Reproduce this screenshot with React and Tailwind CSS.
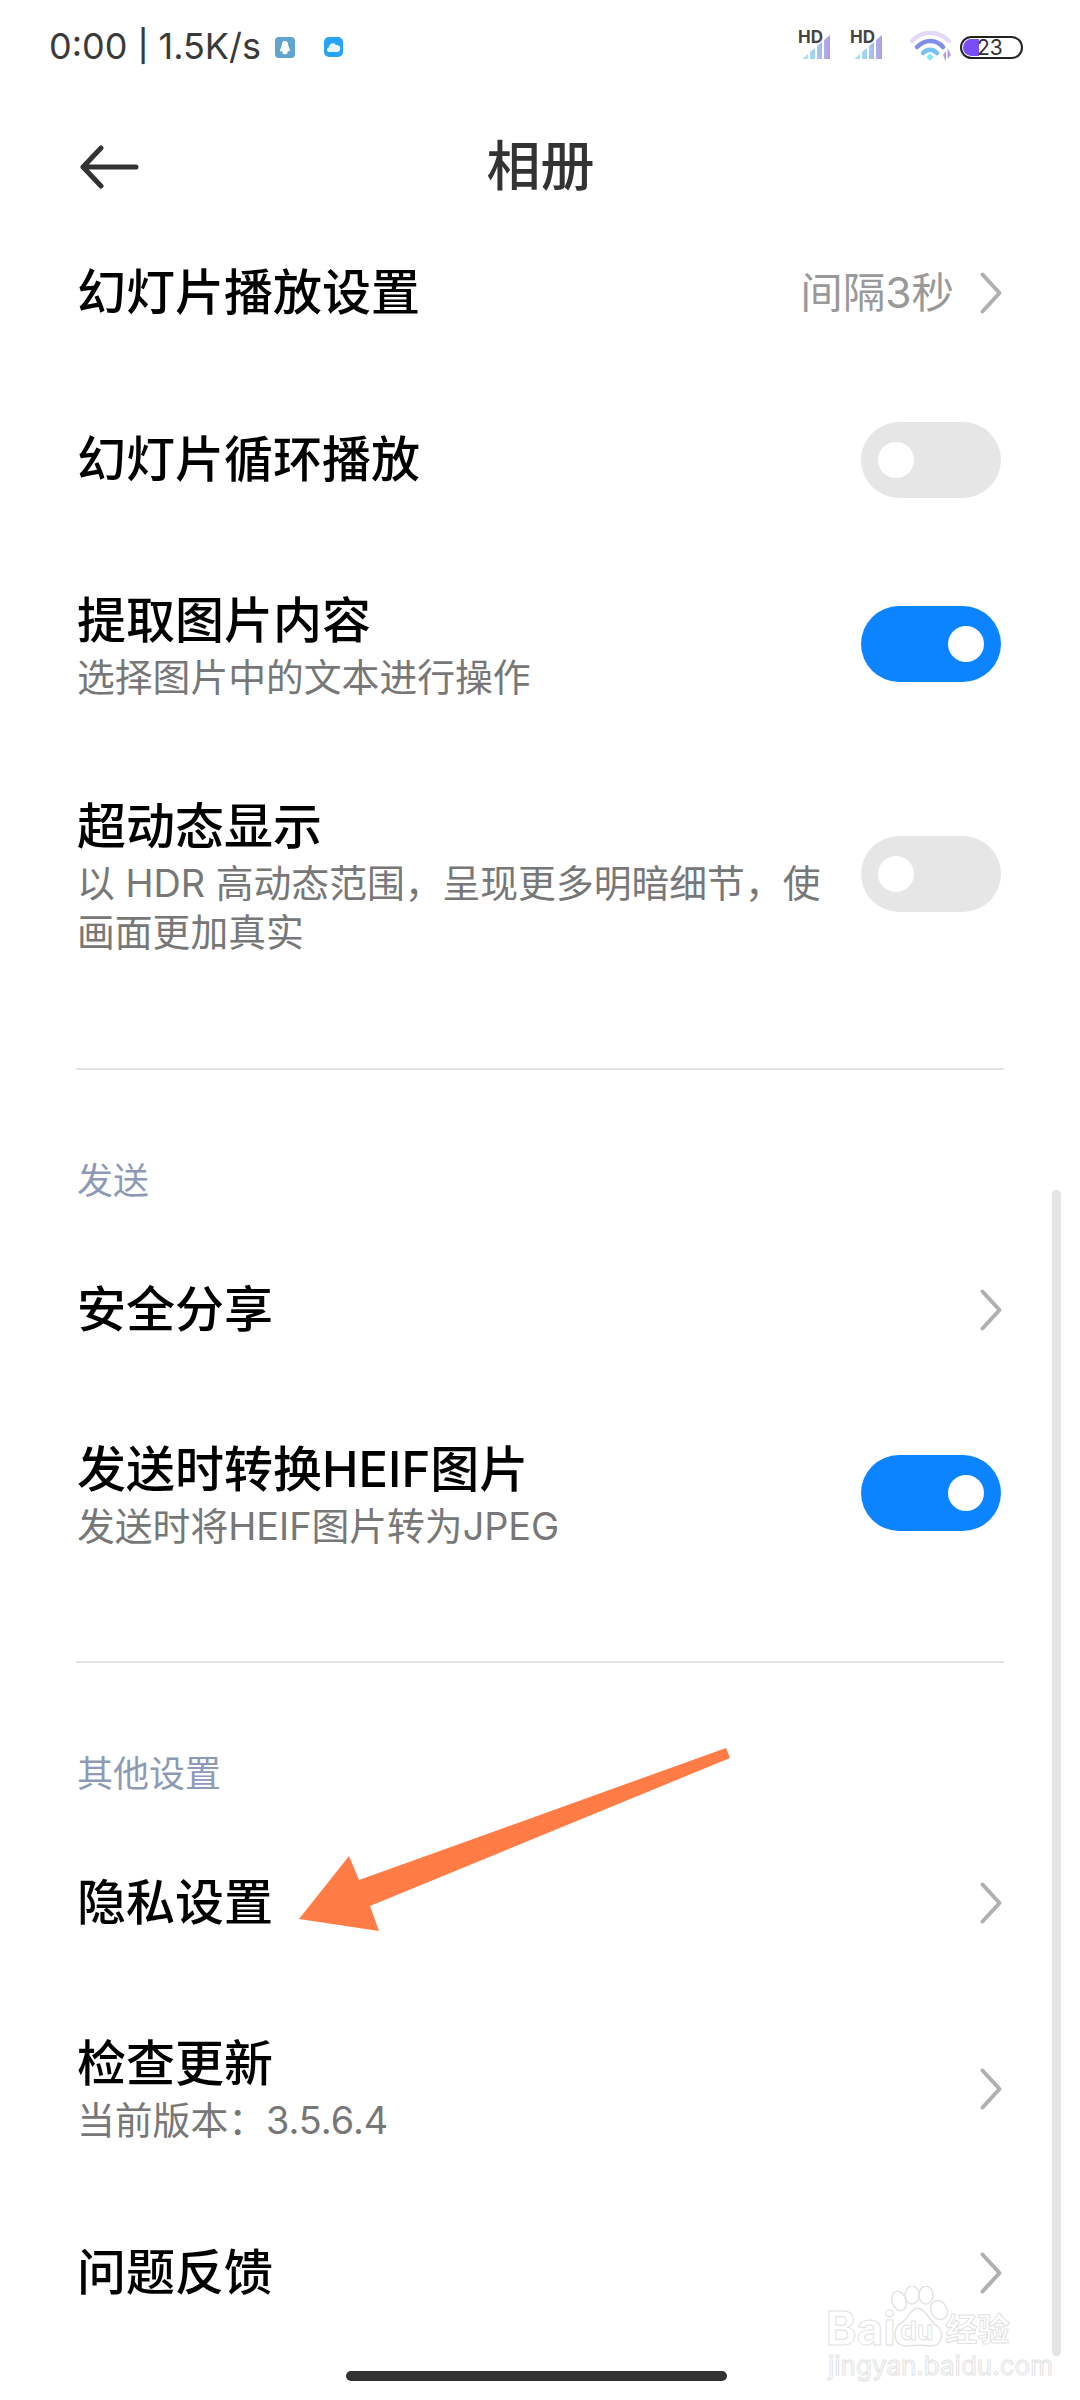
const sans = 'font-["Inter","Noto_Sans_CJK_SC",sans-serif]';

function Chevron() {
  return (
    <svg width="24" height="44" viewBox="0 0 24 44" fill="none" className="-mr-[2px] shrink-0">
      <path d="M3.5 3.5 L20.5 22 L3.5 40.5" stroke="#b0b0b0" strokeWidth="4" strokeLinecap="round" strokeLinejoin="round" />
    </svg>
  );
}

function Toggle({ on, raised }) {
  return (
    <div className={`flex h-[76px] w-[140px] shrink-0 items-center rounded-full px-[17px] ${raised ? 'mb-[6px]' : ''} ${on ? 'justify-end bg-[#0d84ff]' : 'justify-start bg-[#e6e6e6]'}`}>
      <div className="h-[36px] w-[36px] rounded-full bg-white" />
    </div>
  );
}

function Row({ title, sub, right, height }) {
  return (
    <div className={`flex items-center justify-between pl-[77px] pr-[79px] ${height}`}>
      <div className="min-w-0">
        <div className="text-[49px] leading-[60px] font-medium text-black">{title}</div>
        {sub && <div className="mt-[2px] w-[760px] text-[37.8px] leading-[49px] text-[#777]">{sub}</div>}
      </div>
      {right}
    </div>
  );
}

function Divider() {
  return <div className="mx-[76px] mb-[88px] mt-[64px] h-[2px] bg-[#e4e4e4]" />;
}

function SectionLabel({ children }) {
  return <div className="mb-[22px] flex h-[46px] items-center pl-[77px] text-[36px] text-[#8e9ab5]">{children}</div>;
}

function Signal({ id }) {
  return (
    <div className="flex w-[36px] flex-col pb-[2px]">
      <span className="h-[8px] text-[17px] leading-[8px] font-bold text-[#444]">HD</span>
      <svg width="36" height="24" viewBox="0 0 36 24" className="-mt-[6px]">
        <defs>
          <linearGradient id={id} x1="0" x2="1" y1="0" y2="0">
            <stop offset="0" stopColor="#a5f0f5" />
            <stop offset="0.55" stopColor="#a0c8f0" />
            <stop offset="1" stopColor="#b79ae6" />
          </linearGradient>
        </defs>
        <path d="M4 24 L10 19 V24 Z M12 24 V17 L17 13 V24 Z M19 24 V11 L24 7 V24 Z M26 24 V5 L32 0 V24 Z" fill={`url(#${id})`} />
      </svg>
    </div>
  );
}

function StatusBar() {
  return (
    <div className="flex h-[94px] items-center justify-between pl-[49px] pr-[57px]">
      <div className="flex items-center">
        <span className="text-[36px] leading-[44px] text-[#3a3a3a]">
          0:00 <span className="relative -top-[2px] text-[31px] font-medium">|</span> 1.5K/s
        </span>
        <svg width="20" height="21" viewBox="0 0 20 21" className="ml-[14px]">
          <rect width="20" height="21" rx="4" fill="#5fa5d0" />
          <path d="M10 4 C7.5 4 6.8 6 6.8 8 C6.8 9.5 5 11.5 5 14 C5 15 6 14.5 6.6 13.8 C7 15 7.5 15.5 8 16 C7 16.5 7.5 17.2 10 17.2 C12.5 17.2 13 16.5 12 16 C12.5 15.5 13 15 13.4 13.8 C14 14.5 15 15 15 14 C15 11.5 13.2 9.5 13.2 8 C13.2 6 12.5 4 10 4 Z" fill="#fff" />
        </svg>
        <svg width="19" height="20" viewBox="0 0 19 20" className="ml-[29px]">
          <rect width="19" height="20" rx="5" fill="#27a4f6" />
          <path d="M5 15 C2.5 15 2 11 4.8 10.5 C5 7 9.5 4.5 12 8 C15 7.5 17 10 16 12.5 C15.8 14 14.8 15 13.5 15 Z" fill="#e6f6ff" />
        </svg>
      </div>
      <div className="flex items-center">
        <Signal id="sig-a" />
        <div className="ml-[16px]"><Signal id="sig-b" /></div>
        <svg width="42" height="32" viewBox="0 0 42 32" className="ml-[24px]">
          <path d="M2 10 C12 -1 28 -1 39 10" fill="none" stroke="#e3d9f8" strokeWidth="4.5" strokeLinecap="round" />
          <path d="M7 16 C15 8 26 8 33 16" fill="none" stroke="#7f8ee8" strokeWidth="4.5" strokeLinecap="round" />
          <path d="M13 22 C17 17.5 23 17.5 27 22" fill="none" stroke="#74c3f2" strokeWidth="4.5" strokeLinecap="round" />
          <path d="M16.5 26 L20 22.5 L23.5 26 L20 30 Z" fill="#7fe8f2" />
          <path d="M33 24 L36 20 V31 Z M37.5 17 V28 L41 24 Z" fill="#b49ae6" />
        </svg>
        <div className="ml-[8px] flex h-[23px] w-[63px] items-stretch overflow-hidden rounded-full border-[2px] border-[#222] bg-white p-[1px]">
          <div className="w-[16px] rounded-l-full bg-[#7a4dfa]" />
          <span className="-ml-[2px] self-center text-[21px] leading-none text-[#333]">23</span>
        </div>
      </div>
    </div>
  );
}

function Header() {
  return (
    <div className="grid h-[146px] grid-cols-[1fr_auto_1fr] items-center">
      <svg width="60" height="44" viewBox="0 0 60 44" fill="none" className="ml-[80px]">
        <path d="M21 3 L3 22 L21 41 M3 22 H56" stroke="#333" strokeWidth="5" strokeLinecap="round" strokeLinejoin="round" />
      </svg>
      <span className="pl-[1px] text-[54px] leading-[64px] font-medium text-[#333]">相册</span>
    </div>
  );
}

function Watermark() {
  const outline = 'text-transparent [-webkit-text-stroke:1px_#e2e2e2]';
  return (
    <div className="absolute left-[826px] top-[2284px] flex w-[200px] flex-col">
      <div className="flex h-[66px] items-end">
        <span className="mb-[-1px] text-[46px] leading-[46px] font-bold text-transparent [-webkit-text-stroke:1px_#e2e2e2]">Bai</span>
        <div className="relative -ml-[9px] h-[64px] w-[62px] shrink-0">
          <svg width="62" height="64" viewBox="0 0 62 64" fill="none" stroke="#e2e2e2" strokeWidth="1.5">
            <ellipse cx="12" cy="15" rx="7" ry="10" transform="rotate(-20 12 15)" />
            <ellipse cx="25" cy="9" rx="7" ry="9" />
            <ellipse cx="39" cy="9" rx="7" ry="9" />
            <ellipse cx="52" cy="24" rx="8" ry="10" transform="rotate(-30 52 24)" />
            <path d="M30 22 C24 22 22 32 14 37 C5 42 5 60 20 60 C26 60 34 58 42 60 C56 61 58 46 50 40 C42 34 38 22 30 22 Z" />
          </svg>
          <span className={`absolute left-[14px] top-[32px] text-[26px] leading-[26px] font-bold ${outline}`}>du</span>
        </div>
        <span className={`-ml-[3px] mb-[2px] text-[32px] leading-[36px] font-bold ${outline}`}>经验</span>
      </div>
      <span className={`pl-[2px] text-[26px] leading-[32px] ${outline}`}>jingyan.baidu.com</span>
    </div>
  );
}

export default function App() {
  return (
    <div className={`relative h-[2400px] w-[1080px] overflow-hidden bg-white ${sans}`}>
      <StatusBar />
      <Header />

      <Row
        title="幻灯片播放设置"
        height="mb-[30px] h-[106px]"
        right={
          <div className="flex items-center gap-[25px]">
            <span className="text-[42.5px] text-[#999]">间隔3秒</span>
            <Chevron />
          </div>
        }
      />
      <Row title="幻灯片循环播放" height="h-[168px]" right={<Toggle />} />
      <Row title="提取图片内容" sub="选择图片中的文本进行操作" height="h-[205px]" right={<Toggle on raised />} />
      <Row title="超动态显示" sub="以 HDR 高动态范围，呈现更多明暗细节，使画面更加真实" height="h-[255px]" right={<Toggle raised />} />
      <Divider />

      <SectionLabel>发送</SectionLabel>
      <Row title="安全分享" height="h-[168px]" right={<Chevron />} />
      <Row title="发送时转换HEIF图片" sub="发送时将HEIF图片转为JPEG" height="h-[203px]" right={<Toggle on raised />} />
      <Divider />

      <SectionLabel>其他设置</SectionLabel>
      <Row title="隐私设置" height="h-[168px]" right={<Chevron />} />
      <Row title="检查更新" sub="当前版本：3.5.6.4" height="h-[204px]" right={<Chevron />} />
      <Row title="问题反馈" height="h-[164px]" right={<Chevron />} />

      {/* scrollbar, home bar and the overlays pasted on top of the screenshot */}
      <div className="absolute left-[1052px] top-[1190px] h-[1166px] w-[9px] rounded-full bg-[#e4e4e4]" />
      <div className="absolute left-[346px] top-[2371px] h-[10px] w-[381px] rounded-full bg-[#333]" />
      <svg width="1080" height="2400" viewBox="0 0 1080 2400" className="pointer-events-none absolute left-0 top-0">
        <polygon points="726,1748 730,1758 370,1906 379,1931 299,1919 349,1856 359,1880" fill="#ff7c47" />
      </svg>
      <Watermark />
    </div>
  );
}
